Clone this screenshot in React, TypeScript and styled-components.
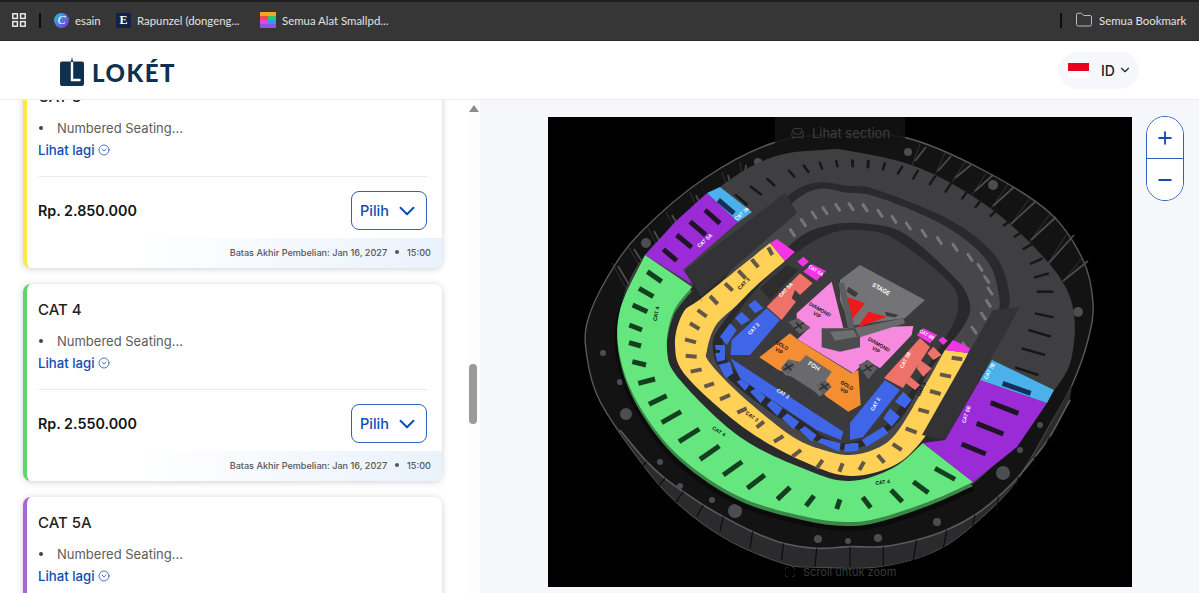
import React from 'react';
import styled, { createGlobalStyle } from 'styled-components';
import { Armchair, ChevronDown, CircleChevronDown, Folder, Minus, Plus, Scan } from 'lucide-react';

type Pt = [number, number];
type Seg = [number, number, number, number];

// the map is traced from the screenshot, so every point is a page coordinate
const scale = (ox: number, oy: number, pts: Pt[]): Pt[] =>
  pts.map(([x, y]) => [ox + x / 3, oy + y / 3] as Pt);
const segs = (ox: number, oy: number, list: Seg[]): Seg[] =>
  list.map(([a, b, c, d]) => [ox + a / 3, oy + b / 3, ox + c / 3, oy + d / 3] as Seg);
const poly = (pts: Pt[]) => pts.map(([x, y]) => `${x},${y}`).join(' ');

const curveTo = (pts: Pt[], closed = false) => {
  let d = '';
  const n = pts.length;
  const at = (i: number) => (closed ? pts[(i + n) % n] : pts[Math.max(0, Math.min(n - 1, i))]);
  const last = closed ? n : n - 1;
  for (let i = 0; i < last; i++) {
    const p0 = at(i - 1);
    const p1 = at(i);
    const p2 = at(i + 1);
    const p3 = at(i + 2);
    const c1 = [p1[0] + (p2[0] - p0[0]) / 6, p1[1] + (p2[1] - p0[1]) / 6];
    const c2 = [p2[0] - (p3[0] - p1[0]) / 6, p2[1] - (p3[1] - p1[1]) / 6];
    d += `C${c1[0]} ${c1[1]} ${c2[0]} ${c2[1]} ${p2[0]} ${p2[1]}`;
  }
  return d;
};
const blob = (pts: Pt[]) => `M${pts[0][0]} ${pts[0][1]}${curveTo(pts, true)}Z`;
const line = (pts: Pt[]) => `M${pts[0][0]} ${pts[0][1]}${curveTo(pts)}`;
const band = (outer: Pt[], inner: Pt[]) => {
  const back = [...inner].reverse();
  return `${line(outer)}L${back[0][0]} ${back[0][1]}${curveTo(back)}Z`;
};

const shell: Pt[] = [
  [773, 143], [840, 134], [907, 138], [983, 170], [1050, 213], [1083, 260], [1093, 303], [1088, 340],
  [1072, 385], [1050, 425], [1027, 465], [1000, 500], [943, 547], [883, 566], [817, 567], [783, 563],
  [723, 537], [667, 493], [620, 433], [597, 395], [587, 357], [587, 323], [607, 278], [640, 233], [705, 178],
];
const shellBottom: Pt[] = [
  [620, 433], [667, 493], [723, 537], [783, 563], [817, 567], [883, 566], [943, 547], [1000, 500], [1027, 465],
  [1050, 425], [1072, 385],
];
const concourse: Pt[] = [
  [720, 187], [773, 157], [823, 150], [850, 151], [917, 167], [983, 203], [1037, 250], [1070, 297],
  [1073, 350], [1053, 392], [973, 484], [883, 520], [807, 520], [740, 500], [680, 460], [640, 410],
  [620, 355], [620, 310], [645, 255],
];
const groove: Pt[] = [
  [793, 192], [850, 186], [883, 192], [950, 220], [993, 253], [1008, 287], [1005, 320], [970, 400],
  [930, 455], [870, 482], [807, 475], [740, 440], [680, 382], [665, 350], [672, 320], [690, 290],
];
const tierTwo: Pt[] = [
  [797, 199], [850, 193], [883, 199], [945, 226], [985, 258], [998, 290], [995, 322], [955, 400],
  [920, 440], [870, 470], [807, 462], [745, 425], [700, 375], [690, 345], [700, 310],
];
const grooveTwo: Pt[] = [
  [790, 245], [830, 225], [870, 224], [905, 234], [950, 273], [968, 297], [966, 322], [930, 370],
  [895, 425], [845, 450], [790, 425], [730, 380], [713, 350], [725, 320],
];
const pit: Pt[] = [
  [800, 250], [835, 232], [870, 231], [898, 241], [945, 278], [958, 300], [950, 330], [905, 400],
  [880, 430], [840, 443], [800, 420], [742, 378], [724, 352], [728, 328], [760, 285],
];

const greenOuter: Pt[] = [
  [645, 255], [620, 310], [620, 357], [640, 407], [680, 457], [740, 497], [807, 517], [850, 522],
  [883, 517], [933, 500], [973, 482],
];
const greenInner: Pt[] = [
  [692, 287], [673, 313], [667, 350], [680, 380], [740, 437], [807, 470], [850, 481], [893, 468], [923, 443],
];
const yellowOuter: Pt[] = [
  [770, 243], [703, 297], [683, 313], [675, 345], [687, 377], [747, 430], [807, 463], [850, 476], [893, 466], [920, 443],
  [945, 405], [968, 353],
];
const yellowInner: Pt[] = [
  [785, 261], [757, 285], [737, 305], [716, 325], [707, 350], [710, 363], [743, 397], [793, 437], [827, 451], [850, 455], [873, 450], [893, 437], [913, 407], [945, 350],
];

const purpleLeft: Pt[] = [[645, 255], [675, 222], [707, 193], [738, 222], [683, 270], [695, 286]];
const blueLeftOuter: Pt[] = [[707, 193], [720, 187], [752, 212], [738, 222]];
const purpleRight: Pt[] = [[923, 443], [945, 440], [980, 380], [1047, 403], [1017, 447], [973, 482]];
const blueRightOuter: Pt[] = [[992, 360], [1054, 390], [1047, 403], [980, 380]];

const fromStageZoom = (pts: Pt[]) => scale(720, 240, pts);
const blocks: { fill: string; pts: Pt[] }[] = [
  { fill: '#f236e6', pts: [[770, 243], [777, 239], [795, 252], [785, 261]] },
  { fill: '#f236e6', pts: fromStageZoom([[232, 65], [250, 50], [267, 65], [248, 80]]) },
  { fill: '#f236e6', pts: fromStageZoom([[250, 95], [275, 72], [318, 93], [290, 122]]) },
  { fill: '#ee716a', pts: fromStageZoom([[140, 200], [240, 100], [278, 130], [240, 165], [225, 150], [215, 175], [228, 185], [185, 240]]) },
  { fill: '#3f66e6', pts: fromStageZoom([[140, 205], [180, 240], [90, 345], [32, 345], [35, 300]]) },
  { fill: '#3f66e6', pts: fromStageZoom([[85, 195], [105, 180], [130, 205], [105, 220]]) },
  { fill: '#3f66e6', pts: fromStageZoom([[45, 235], [65, 215], [90, 240], [65, 255]]) },
  { fill: '#3f66e6', pts: fromStageZoom([[0, 290], [30, 250], [50, 270], [20, 315]]) },
  { fill: '#3f66e6', pts: fromStageZoom([[0, 325], [15, 325], [15, 345], [0, 350]]) },
  { fill: '#3f66e6', pts: scale(540, 340, [[525, 15], [555, 15], [555, 30], [528, 30]]) },
  { fill: '#3f66e6', pts: scale(540, 340, [[525, 40], [555, 35], [555, 60], [532, 65]]) },
  { fill: '#3f66e6', pts: scale(540, 340, [[535, 75], [570, 65], [580, 100], [558, 115]]) },
  { fill: '#3f66e6', pts: scale(540, 340, [[572, 55], [910, 275], [903, 300], [830, 270], [600, 115]]) },
  { fill: '#3f66e6', pts: scale(540, 340, [[590, 125], [605, 118], [628, 135], [615, 152]]) },
  { fill: '#3f66e6', pts: scale(540, 340, [[630, 155], [648, 145], [677, 170], [662, 190]]) },
  { fill: '#3f66e6', pts: scale(540, 340, [[680, 195], [695, 180], [728, 205], [712, 228]]) },
  { fill: '#3f66e6', pts: scale(540, 340, [[725, 235], [742, 220], [778, 245], [760, 268]]) },
  { fill: '#3f66e6', pts: scale(540, 340, [[778, 270], [795, 258], [830, 285], [815, 305]]) },
  { fill: '#3f66e6', pts: scale(540, 340, [[832, 305], [845, 295], [902, 310], [898, 335]]) },
  { fill: '#3f66e6', pts: scale(540, 340, [[915, 312], [955, 310], [955, 333], [912, 335]]) },
  { fill: '#3f66e6', pts: scale(540, 340, [[930, 250], [1000, 170], [1000, 245], [935, 285]]) },
  { fill: '#3f66e6', pts: [[850, 423], [885, 380], [900, 390], [863, 437], [850, 440]] },
  { fill: '#3f66e6', pts: scale(850, 340, [[160, 155], [185, 180], [165, 205], [135, 185]]) },
  { fill: '#3f66e6', pts: scale(850, 340, [[120, 205], [150, 230], [125, 260], [100, 235]]) },
  { fill: '#3f66e6', pts: scale(850, 340, [[35, 300], [100, 260], [115, 280], [50, 320]]) },
  { fill: '#3f66e6', pts: scale(850, 340, [[0, 310], [25, 310], [25, 330], [0, 335]]) },
  { fill: '#ee716a', pts: [[920, 338], [930, 347], [903, 388], [884, 378]] },
  { fill: '#ee716a', pts: fromStageZoom([[640, 320], [665, 345], [640, 360], [622, 340]]) },
  { fill: '#ee716a', pts: fromStageZoom([[600, 360], [635, 385], [610, 410], [590, 385]]) },
  { fill: '#ee716a', pts: fromStageZoom([[570, 410], [600, 435], [585, 450], [558, 430]]) },
  { fill: '#f236e6', pts: fromStageZoom([[590, 285], [610, 265], [652, 285], [630, 310]]) },
  { fill: '#f236e6', pts: fromStageZoom([[655, 300], [668, 290], [683, 302], [670, 315]]) },
  { fill: '#f236e6', pts: [[945, 350], [953, 340], [970, 348], [968, 353]] },
];

const greenSeats: Seg[] = [
  ...segs(540, 110, [
    [322, 485, 365, 515], [297, 535, 340, 560], [278, 585, 322, 605], [268, 645, 306, 660], [267, 698, 303, 708],
  ]),
  ...segs(540, 340, [
    [277, 65, 318, 75], [295, 130, 345, 117], [327, 193, 380, 167], [365, 248, 423, 215], [417, 305, 478, 267],
    [480, 358, 538, 318], [550, 405, 606, 365], [622, 445, 674, 405], [712, 478, 750, 442], [798, 498, 822, 467],
    [890, 507, 900, 478],
  ]),
  ...segs(850, 340, [
    [38, 472, 62, 503], [123, 450, 157, 485], [190, 425, 235, 458], [255, 385, 315, 418],
  ]),
];
const purpleSeats: Seg[] = [
  ...segs(540, 110, [
    [370, 418, 410, 452], [410, 375, 455, 412], [450, 335, 497, 375], [495, 300, 540, 340],
  ]),
  ...segs(850, 340, [
    [335, 312, 407, 342], [380, 250, 460, 282], [422, 188, 505, 220],
  ]),
];
const blueSeats: Seg[] = [
  ...segs(540, 110, [[535, 270, 582, 310]]),
  ...segs(850, 340, [[458, 130, 542, 160]]),
];
const yellowSeats: Seg[] = [
  ...segs(540, 110, [
    [685, 412, 697, 435], [635, 448, 655, 472], [595, 482, 617, 505], [555, 520, 578, 542], [510, 558, 533, 582],
    [473, 600, 500, 620], [450, 640, 478, 657], [435, 688, 468, 697],
  ]),
  ...segs(540, 340, [
    [437, 47, 470, 50], [452, 95, 485, 88], [493, 140, 522, 130], [540, 178, 570, 165], [592, 218, 620, 205],
    [650, 262, 672, 245], [702, 305, 730, 288], [757, 350, 783, 330], [830, 385, 848, 360], [898, 395, 908, 370],
    [958, 390, 972, 365],
  ]),
  ...segs(850, 340, [
    [83, 345, 103, 368], [128, 312, 155, 330], [167, 265, 200, 278], [205, 208, 237, 217], [240, 153, 272, 162],
    [270, 103, 303, 110], [305, 53, 337, 58],
  ]),
];
const upperTicks: Seg[] = [
  ...segs(540, 110, [
    [585, 253, 622, 285], [630, 228, 665, 255], [680, 205, 705, 228], [745, 180, 765, 202], [790, 165, 807, 188],
    [838, 155, 847, 178], [888, 150, 893, 172], [937, 148, 939, 170], [985, 150, 982, 172],
  ]),
  ...segs(850, 110, [
    [8, 150, 8, 172], [55, 150, 55, 175], [105, 157, 98, 182], [158, 168, 142, 193], [205, 180, 188, 208],
    [257, 197, 238, 225], [305, 217, 285, 248], [355, 240, 335, 268], [398, 265, 375, 293], [445, 295, 420, 320],
    [485, 328, 460, 348], [520, 362, 492, 382], [550, 400, 518, 418], [578, 445, 540, 462], [597, 490, 552, 503],
    [610, 545, 560, 545], [610, 622, 555, 610], [603, 680, 535, 660],
  ]),
  ...segs(850, 340, [[585, 45, 515, 25], [565, 105, 495, 82]]),
];
const lights: Pt[] = [
  ...scale(540, 110, [[757, 368], [790, 338], [822, 315], [855, 302], [893, 292], [933, 290], [975, 293]]),
  ...scale(850, 110, [
    [45, 293], [90, 310], [132, 328], [175, 348], [222, 370], [268, 392], [315, 412], [360, 442], [390, 472],
    [410, 508], [420, 543], [415, 580], [400, 618], [372, 660], [345, 708],
  ]),
];
const pegs: [number, number, number][] = [
  [646, 243, 5], [758, 162, 4], [908, 152, 4], [993, 185, 5], [1078, 312, 5], [626, 414, 6], [735, 511, 7],
  [818, 539, 4], [848, 541, 3], [1003, 473, 7], [937, 522, 4], [878, 538, 4], [620, 382, 3], [603, 353, 3],
  [660, 462, 3], [680, 486, 3], [712, 500, 3], [1068, 358, 3], [1040, 425, 3], [1020, 450, 3],
];
const spokes: Seg[] = [
  [612, 263, 628, 292], [628, 246, 645, 275], [648, 228, 662, 255], [666, 212, 680, 238], [690, 192, 700, 215],
  [722, 172, 728, 190], [740, 162, 742, 178], [920, 144, 912, 165], [945, 153, 935, 175], [965, 162, 952, 182],
  [987, 172, 972, 195], [1008, 184, 990, 210], [1030, 198, 1008, 228], [1050, 214, 1028, 244], [1068, 232, 1045, 268],
  [1082, 258, 1060, 285],
];
const drumCuts: Seg[] = [
  ...segs(540, 340, [
    [320, 365, 300, 385], [375, 415, 350, 445], [430, 455, 405, 490], [490, 495, 470, 530],
    [550, 530, 540, 575], [638, 575, 630, 625], [730, 610, 725, 660], [830, 625, 825, 680], [930, 620, 930, 680],
  ]),
  ...segs(850, 340, [
    [100, 620, 100, 680], [200, 600, 190, 660], [290, 570, 280, 625], [375, 525, 365, 575], [445, 470, 440, 510],
    [505, 410, 500, 440], [555, 350, 550, 380], [600, 290, 590, 310],
  ]),
];
const drumLine: Pt[] = [
  ...scale(540, 340, [
    [240, 270], [320, 365], [375, 415], [430, 455], [490, 495], [550, 530], [638, 575], [730, 610], [830, 625], [930, 620],
  ]),
  ...scale(850, 340, [[100, 620], [200, 600], [290, 570], [375, 525], [445, 470], [505, 410], [555, 350], [600, 290], [660, 180]]),
];

const labels: { text: string[]; x: number; y: number; r: number; fill: string; size?: number }[] = [
  { text: ['CAT 5A'], x: 706, y: 242, r: -42, fill: '#fff' },
  { text: ['CAT 7A'], x: 743, y: 215, r: -42, fill: '#fff' },
  { text: ['CAT 4'], x: 658, y: 314, r: -78, fill: '#111' },
  { text: ['CAT 3'], x: 745, y: 285, r: -45, fill: '#111' },
  { text: ['CAT 2'], x: 755, y: 330, r: -48, fill: '#fff' },
  { text: ['CAT 6A'], x: 815, y: 272, r: 32, fill: '#fff', size: 4.6 },
  { text: ['CAT 5A'], x: 787, y: 291, r: -46, fill: '#fff' },
  { text: ['CAT 6B'], x: 926, y: 336, r: 30, fill: '#fff', size: 4.6 },
  { text: ['CAT 5B'], x: 907, y: 361, r: -62, fill: '#fff' },
  { text: ['CAT 3'], x: 923, y: 390, r: -66, fill: '#111' },
  { text: ['CAT 2'], x: 877, y: 405, r: -60, fill: '#fff' },
  { text: ['CAT 5B'], x: 968, y: 415, r: -72, fill: '#fff' },
  { text: ['CAT 7B'], x: 991, y: 372, r: -62, fill: '#fff' },
  { text: ['CAT 4'], x: 883, y: 484, r: -8, fill: '#111' },
  { text: ['CAT 4'], x: 718, y: 433, r: 32, fill: '#111' },
  { text: ['CAT 3'], x: 751, y: 418, r: 35, fill: '#111' },
  { text: ['CAT 2'], x: 782, y: 395, r: 32, fill: '#fff' },
  { text: ['STAGE'], x: 880, y: 291, r: 30, fill: '#fff', size: 6 },
  { text: ['DIAMOND', 'VIP'], x: 819, y: 311, r: 30, fill: '#111' },
  { text: ['DIAMOND', 'VIP'], x: 878, y: 346, r: 30, fill: '#111' },
  { text: ['GOLD', 'VIP'], x: 781, y: 347, r: 30, fill: '#111' },
  { text: ['GOLD', 'VIP'], x: 846, y: 387, r: 30, fill: '#111' },
  { text: ['FOH'], x: 813, y: 368, r: 30, fill: '#fff', size: 6 },
];

const Lines = ({ list, color, width }: { list: Seg[]; color: string; width: number }) => (
  <g stroke={color} strokeWidth={width}>
    {list.map(([x1, y1, x2, y2], i) => (
      <line key={i} x1={x1} y1={y1} x2={x2} y2={y2} />
    ))}
  </g>
);

const Cross = ({ pts }: { pts: Pt[] }) => {
  const cx = pts.reduce((s, p) => s + p[0], 0) / pts.length;
  const cy = pts.reduce((s, p) => s + p[1], 0) / pts.length;
  return (
    <g>
      <polygon points={poly(pts)} fill="#5e5e60" />
      <path d={`M${cx - 5} ${cy + 3}L${cx + 5} ${cy - 3}M${cx - 3} ${cy - 3}L${cx + 3} ${cy + 3}`} stroke="#2e2e30" strokeWidth="1.6" />
    </g>
  );
};

const StadiumMap = () => (
  <svg viewBox="548 117 584 470" width="584" height="470" style={{ display: 'block' }}>
    <rect x="548" y="117" width="584" height="470" fill="#000" />
    <path d={blob(shell)} fill="#131314" stroke="#59595b" strokeWidth="1.4" />
    <Lines list={spokes} color="#3a3a3c" width={0.8} />
    <Lines list={spokes.map(([a, b, c, d]) => [a + 6, b + 3, c + 3, d - 4] as Seg)} color="#4c4c4e" width={1.8} />
    <path d={band(scale(540, 340, [[240, 270]]).concat(drumLine.slice(1)), shellBottom)} fill="#2b2b2d" />
    <path d={line(drumLine)} fill="none" stroke="#5b5b5d" strokeWidth="1.6" />
    <Lines list={drumCuts} color="#0e0e0f" width={1.2} />
    {pegs.map(([x, y, r], i) => (
      <circle key={i} cx={x} cy={y} r={r} fill="#4c4d50" />
    ))}

    <path d={blob(concourse)} fill="#3f3f41" />
    <path d={line(greenOuter)} transform="translate(0 6)" fill="none" stroke="#0b0b0b" strokeWidth="6" />
    <Lines list={upperTicks} color="#161617" width={2.4} />
    <path d={blob(groove)} fill="#2a2a2c" />
    <path d={blob(tierTwo)} fill="#474749" />
    <path d={blob(grooveTwo)} fill="#29292b" />
    <path d={blob(pit)} fill="#3b3b3d" />
    <g fill="none" stroke="#767678" strokeWidth="3" strokeLinecap="round">
      {lights.map(([x, y], i) => (
        <line key={i} x1={x - 2} y1={y - 3} x2={x + 2} y2={y + 3} />
      ))}
    </g>

    <path d={band(greenOuter, greenInner)} transform="translate(0 4)" fill="#3a8749" />
    <path d={`${band(greenOuter, greenInner)}`} fill="#65e67f" />
    <polygon points={poly(purpleLeft)} fill="#9a2bd6" />
    <polygon points={poly(blueLeftOuter)} fill="#4cb0ea" />
    <polygon points={poly(purpleRight)} fill="#9a2bd6" />
    <polygon points={poly(blueRightOuter)} fill="#4cb0ea" />
    <path d={band(yellowOuter, yellowInner)} fill="#ffd257" />

    <Lines list={greenSeats} color="#14401f" width={5} />
    <Lines list={purpleSeats} color="#1f1426" width={5} />
    <Lines list={blueSeats} color="#12305e" width={5} />
    <Lines list={yellowSeats} color="#65564a" width={4} />

    <polygon points="685,270 785,193 797,213 700,297" fill="#333335" />
    <polygon points="685,270 700,297 702,302 688,276" fill="#1c1c1d" />
    <polygon points="993,310 1020,307 945,440 922,435" fill="#333335" />
    <polygon points="760,288 787,265 798,270 770,300" fill="#2d2d2f" />

    {blocks.map((b, i) => (
      <polygon key={i} points={poly(b.pts)} fill={b.fill} />
    ))}

    <polygon points="840,280 860,265 925,300 905,318 850,326 840,300" fill="#747476" />
    <polygon points={poly(fromStageZoom([[385, 140], [415, 160], [405, 172], [380, 155]]))} fill="#3b3b3d" />
    <polygon points={poly(fromStageZoom([[495, 215], [535, 225], [525, 232], [500, 228]]))} fill="#3b3b3d" />

    <polygon
      points={poly(
        fromStageZoom([
          [335, 125], [370, 265], [580, 258], [575, 285], [480, 385], [440, 360], [400, 400], [232, 298], [270, 262], [230, 235], [230, 220],
        ]),
      )}
      fill="#f58ade"
    />
    <polygon points={poly(fromStageZoom([[380, 170], [435, 190], [388, 248]]))} fill="#f01818" />
    <polygon points={poly(fromStageZoom([[445, 215], [500, 230], [412, 263]]))} fill="#f01818" />
    <polygon
      points={poly(
        fromStageZoom([
          [118, 352], [210, 280], [235, 300], [395, 400], [415, 390], [422, 495], [385, 515], [320, 470], [270, 420], [190, 395], [175, 390],
        ]),
      )}
      fill="#f58e32"
    />
    <polygon
      points={poly(
        fromStageZoom([
          [182, 385], [205, 358], [240, 365], [258, 345], [335, 395], [318, 420], [325, 440], [300, 470], [285, 455], [215, 410], [195, 405],
        ]),
      )}
      fill="#6a6a6c"
    />
    <Cross pts={fromStageZoom([[205, 245], [235, 235], [270, 265], [238, 282]])} />
    <Cross pts={fromStageZoom([[415, 375], [445, 360], [472, 385], [445, 418]])} />
    <Cross pts={fromStageZoom([[185, 385], [205, 360], [225, 380], [205, 402]])} />
    <Cross pts={fromStageZoom([[290, 435], [315, 420], [335, 440], [310, 465]])} />

    <polygon points={poly(fromStageZoom([[355, 130], [372, 128], [405, 268], [385, 270]]))} fill="#5d5d5f" />
    <polygon points={poly(fromStageZoom([[400, 265], [550, 235], [555, 250], [420, 292]]))} fill="#6a6a6c" />
    <polygon points={poly(fromStageZoom([[305, 265], [405, 265], [420, 292], [420, 322], [360, 335], [305, 322]]))} fill="#4c4c4e" />
    <polygon points={poly(fromStageZoom([[330, 275], [400, 270], [412, 290], [345, 302]]))} fill="#6e6e70" />

    {labels.map((l, i) => (
      <text
        key={i}
        transform={`translate(${l.x} ${l.y}) rotate(${l.r})`}
        textAnchor="middle"
        fontFamily="Inter, sans-serif"
        fontWeight="600"
        fontSize={l.size ?? 5}
        fill={l.fill}
      >
        {l.text.map((t, j) => (
          <tspan key={j} x="0" dy={j === 0 ? 0 : 6}>
            {t}
          </tspan>
        ))}
      </text>
    ))}
  </svg>
);

const tickets = [
  { name: 'CAT 3', price: 'Rp. 2.850.000', bar: '#ffe83f' },
  { name: 'CAT 4', price: 'Rp. 2.550.000', bar: '#5fd36e' },
  { name: 'CAT 5A', price: 'Rp. 2.250.000', bar: '#a866cf' },
];

const App = () => (
  <Page>
    <GlobalStyle />
    <BookmarkBar>
      <GridIcon viewBox="0 0 14 14">
        <rect x="0.8" y="0.8" width="4.6" height="4.6" />
        <rect x="8.6" y="0.8" width="4.6" height="4.6" />
        <rect x="0.8" y="8.6" width="4.6" height="4.6" />
        <rect x="8.6" y="8.6" width="4.6" height="4.6" />
      </GridIcon>
      <BarDivider />
      <Bookmark $width={62}>
        <CanvaBadge>C</CanvaBadge>
        esain
      </Bookmark>
      <Bookmark $width={144}>
        <SerifBadge>E</SerifBadge>
        Rapunzel (dongeng...
      </Bookmark>
      <Bookmark $width={128}>
        <svg width="16" height="16" viewBox="0 0 16 16">
          <rect width="16" height="4" fill="#f5a623" />
          <rect y="4" width="8" height="4" fill="#ef4a4a" />
          <rect x="8" y="4" width="8" height="4" fill="#35c46b" />
          <rect y="8" width="8" height="4" fill="#e24bd0" />
          <rect x="8" y="8" width="8" height="4" fill="#2e9bf0" />
          <rect y="12" width="16" height="4" fill="#8e52ee" />
        </svg>
        Semua Alat Smallpd...
      </Bookmark>
      <BarSpacer />
      <BarDivider />
      <Bookmark $width={112}>
        <Folder size={18} strokeWidth={1.2} color="#c9c9c9" />
        Semua Bookmark
      </Bookmark>
    </BookmarkBar>

    <Header>
      <LogoLink>
        <svg width="25" height="30" viewBox="0 0 25 30">
          <path d="M0 6.5a2 2 0 0 1 2-2h9l1-4.5 1 4.5h9a2 2 0 0 1 2 2V27a2 2 0 0 1-2 2H2a2 2 0 0 1-2-2z" fill="#10304f" />
          <path d="M12 5v18h8.5" fill="none" stroke="#fff" strokeWidth="2.4" />
        </svg>
        <LogoText>LOKÉT</LogoText>
      </LogoLink>
      <LangPill>
        <Flag />
        <span>ID</span>
        <ChevronDown size={14} color="#222" />
      </LangPill>
    </Header>

    <Main>
      <TicketColumn>
        <TicketList>
          {tickets.map((ticket) => (
            <Card key={ticket.name} $bar={ticket.bar}>
              <CardBody>
                <CardTitle>{ticket.name}</CardTitle>
                <Bullets>
                  <li>Numbered Seating...</li>
                </Bullets>
                <MoreLink>
                  Lihat lagi <CircleChevronDown size={12} strokeWidth={1.5} />
                </MoreLink>
                <Dashed />
                <PriceRow>
                  <Price>{ticket.price}</Price>
                  <PickButton>
                    Pilih
                    <ChevronDown size={26} strokeWidth={1.8} />
                  </PickButton>
                </PriceRow>
              </CardBody>
              <Deadline>
                Batas Akhir Pembelian: Jan 16, 2027 <Dot /> 15:00
              </Deadline>
            </Card>
          ))}
        </TicketList>
        <ScrollTrack>
          <ScrollArrow />
          <ScrollThumb />
        </ScrollTrack>
      </TicketColumn>

      <MapPane>
        <MapFrame>
          <StadiumMap />
          <SectionHint>
            <Armchair size={15} strokeWidth={1.5} />
            Lihat section
          </SectionHint>
          <ZoomHint>
            <Scan size={12} strokeWidth={1.5} />
            Scroll untuk zoom
          </ZoomHint>
        </MapFrame>
        <ZoomControl>
          <ZoomButton>
            <Plus size={20} strokeWidth={2.2} />
          </ZoomButton>
          <ZoomButton>
            <Minus size={20} strokeWidth={2.2} />
          </ZoomButton>
        </ZoomControl>
      </MapPane>
    </Main>
  </Page>
);

export default App;

const GlobalStyle = createGlobalStyle`
  html, body {
    margin: 0;
    padding: 0;
    background: #fff;
    font-family: Inter, "Liberation Sans", sans-serif;
    overflow: hidden;
  }
  * {
    box-sizing: border-box;
  }
`;

const Page = styled.div`
  display: flex;
  flex-direction: column;
  width: 1199px;
  height: 593px;
  overflow: hidden;
`;

const BookmarkBar = styled.div`
  display: flex;
  align-items: center;
  flex: none;
  height: 41px;
  padding: 0 12px;
  background: linear-gradient(#1f1f1f 0 2px, #363636 2px);
  border-bottom: 1px solid #2b2b2b;
  color: #e3e3e3;
  font-family: Lato, sans-serif;
  font-size: 11.4px;
`;

const GridIcon = styled.svg`
  width: 14px;
  height: 14px;
  margin-right: 13px;
  fill: none;
  stroke: #e8e8e8;
  stroke-width: 1.5;
`;

const BarDivider = styled.div`
  width: 2px;
  height: 15px;
  margin-right: 13px;
  background: #0d0d0d;
`;

const BarSpacer = styled.div`
  flex: 1;
`;

const Bookmark = styled.div<{ $width: number }>`
  display: flex;
  align-items: center;
  gap: 6px;
  width: ${({ $width }) => $width}px;
  white-space: nowrap;

  svg {
    flex: none;
  }
`;

const CanvaBadge = styled.span`
  display: flex;
  align-items: center;
  justify-content: center;
  width: 15px;
  height: 15px;
  border-radius: 50%;
  background: linear-gradient(135deg, #26c6da, #7d2ae8);
  color: #fff;
  font-family: 'Liberation Serif', serif;
  font-style: italic;
  font-size: 12px;
`;

const SerifBadge = styled.span`
  display: flex;
  align-items: center;
  justify-content: center;
  width: 15px;
  height: 15px;
  background: #14204a;
  color: #fff;
  font-family: 'Liberation Serif', serif;
  font-weight: 700;
  font-size: 12px;
`;

const Header = styled.header`
  display: flex;
  align-items: center;
  justify-content: space-between;
  flex: none;
  height: 59px;
  padding: 0 60px;
  background: #fff;
  border-bottom: 1px solid #eceef3;
`;

const LogoLink = styled.div`
  display: flex;
  align-items: center;
  gap: 7px;
  margin-top: 3px;
`;

const LogoText = styled.span`
  margin-top: 3px;
  color: #10304f;
  font-family: Lato, sans-serif;
  font-weight: 900;
  font-size: 24px;
  line-height: 26px;
  letter-spacing: 1.5px;
`;

const LangPill = styled.div`
  display: flex;
  align-items: center;
  width: 80px;
  height: 37px;
  padding-left: 9px;
  border-radius: 19px;
  background: #f5f7fb;
  color: #222;
  font-size: 14px;
  font-weight: 500;

  span {
    margin: 0 3px 0 12px;
  }
`;

const Flag = styled.div`
  width: 21px;
  height: 15px;
  background: linear-gradient(#e8001c 0 50%, #fff 50%);
`;

const Main = styled.main`
  display: flex;
  flex: 1;
  min-height: 0;
`;

const TicketColumn = styled.div`
  display: flex;
  flex: none;
  width: 480px;
  height: 100%;
  overflow: hidden;
  background: #fff;
`;

const TicketList = styled.div`
  display: flex;
  flex-direction: column;
  gap: 16px;
  width: 467px;
  margin-top: -29px;
  padding-left: 23px;
`;

const Card = styled.article<{ $bar: string }>`
  display: flex;
  flex-direction: column;
  flex: none;
  width: 419px;
  height: 197px;
  overflow: hidden;
  border-left: 4px solid ${({ $bar }) => $bar};
  border-radius: 8px;
  background: #fff;
  box-shadow: 0 1px 6px rgba(30, 40, 70, 0.22);
`;

const CardBody = styled.div`
  flex: 1;
  padding: 16px 15px 0 11px;
`;

const CardTitle = styled.h3`
  margin: 0;
  color: #222;
  font-size: 15px;
  font-weight: 500;
  line-height: 20px;
`;

const Bullets = styled.ul`
  margin: 11px 0 0;
  padding: 0;
  list-style: none;
  color: #5c5c5c;
  font-size: 13px;
  line-height: 20px;

  li {
    display: flex;
    align-items: center;
    gap: 14px;
    padding-left: 1px;
  }

  li::before {
    content: '';
    width: 4px;
    height: 4px;
    border-radius: 50%;
    background: #444;
  }
`;

const MoreLink = styled.div`
  display: flex;
  align-items: center;
  gap: 3px;
  margin-top: 2px;
  color: #0f4cb5;
  font-size: 13.2px;
  font-weight: 500;
  line-height: 20px;
`;

const Dashed = styled.div`
  margin-top: 16px;
  border-top: 1px dotted #dcdcdc;
`;

const PriceRow = styled.div`
  display: flex;
  align-items: center;
  justify-content: space-between;
  margin-top: 14px;
`;

const Price = styled.strong`
  color: #151515;
  font-size: 14.3px;
  font-weight: 600;
`;

const PickButton = styled.button`
  display: flex;
  align-items: center;
  justify-content: space-between;
  width: 76px;
  height: 39px;
  padding: 0 6px 0 8px;
  border: 1px solid #2e62bd;
  border-radius: 8px;
  background: #fff;
  color: #0f4cb5;
  font-family: inherit;
  font-size: 14.5px;
  font-weight: 500;
`;

const Deadline = styled.div`
  display: flex;
  align-items: center;
  justify-content: flex-end;
  gap: 5px;
  flex: none;
  height: 30px;
  padding: 0 11px 2px 0;
  background: linear-gradient(90deg, #fff 25%, #eaf2fc);
  color: #555;
  font-size: 9.1px;
  font-weight: 500;
`;

const Dot = styled.span`
  width: 4px;
  height: 4px;
  margin: 0 3px;
  border-radius: 50%;
  background: #555;
`;

const ScrollTrack = styled.div`
  position: relative;
  flex: none;
  width: 13px;
  height: 100%;
  background: #fdfdfd;
`;

const ScrollArrow = styled.div`
  position: absolute;
  top: 5px;
  left: 2px;
  border: 5px solid transparent;
  border-top: none;
  border-bottom: 7px solid #8c8c8c;
`;

const ScrollThumb = styled.div`
  position: absolute;
  top: 264px;
  left: 2px;
  width: 8px;
  height: 60px;
  border-radius: 4px;
  background: #9a9a9a;
`;

const MapPane = styled.div`
  display: flex;
  align-items: flex-start;
  gap: 14px;
  flex: 1;
  padding: 17px 0 0 68px;
  background: #f5f7fb;
`;

const MapFrame = styled.div`
  position: relative;
  flex: none;
  width: 584px;
  height: 470px;
`;

const SectionHint = styled.div`
  position: absolute;
  top: 0;
  left: 227px;
  display: flex;
  align-items: center;
  justify-content: center;
  gap: 7px;
  width: 130px;
  height: 32px;
  border-radius: 0 0 4px 4px;
  background: rgba(18, 18, 18, 0.88);
  color: #3f3f3f;
  font-size: 13px;
`;

const ZoomHint = styled.div`
  position: absolute;
  bottom: 8px;
  left: 236px;
  display: flex;
  align-items: center;
  gap: 7px;
  color: #3a3a3a;
  font-size: 11px;
`;

const ZoomControl = styled.div`
  display: flex;
  flex-direction: column;
  flex: none;
  width: 38px;
  height: 85px;
  margin-top: -1px;
  overflow: hidden;
  border: 1px solid #2e62bd;
  border-radius: 19px;
  background: #fff;
`;

const ZoomButton = styled.button`
  display: flex;
  align-items: center;
  justify-content: center;
  flex: 1;
  padding: 0;
  border: none;
  background: #fff;
  color: #0f4cb5;

  & + & {
    border-top: 1px solid #2e62bd;
  }
`;
